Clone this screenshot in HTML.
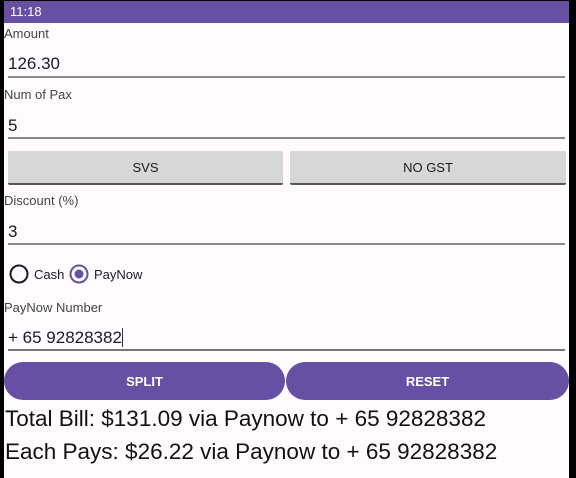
<!DOCTYPE html>
<html><head><style>
*{margin:0;padding:0;box-sizing:border-box}
body{width:576px;height:478px;background:#000;position:relative;overflow:hidden;font-family:"Liberation Sans",sans-serif;color:#1c1b1f}
#app{position:absolute;left:4px;top:1px;width:565px;height:477px;background:#fffbfe}
.sb{position:absolute;left:0;top:0;width:565px;height:22px;background:#6750a4;color:#fff;font-size:13px;line-height:22px;padding-left:6px}
.a{position:absolute}
.lbl{font-size:13px;color:#444}
.val{font-size:17px;color:#1c1b1f}
.line{position:absolute;height:2px;background:#8a8a8a;left:4px;width:557px}
.gb{position:absolute;top:150px;height:34px;background:#d6d7d7;border-bottom:2px solid #555;font-size:13px;display:flex;align-items:center;justify-content:center;border-radius:2px}
.pb{position:absolute;top:361px;height:38px;background:#6750a4;color:#fff;font-size:13px;font-weight:bold;border-radius:19px;display:flex;align-items:center;justify-content:center}
.big{font-size:22.5px;color:#111}
</style></head><body>
<div id="app">
<div class="sb">11:18</div>
<div class="a lbl" style="left:0;top:25px">Amount</div>
<div class="a val" style="left:4px;top:53px">126.30</div>
<div class="line" style="top:75px"></div>
<div class="a lbl" style="left:0;top:86px">Num of Pax</div>
<div class="a val" style="left:4px;top:115px">5</div>
<div class="line" style="top:136px"></div>
<div class="gb" style="left:4px;width:275px">SVS</div>
<div class="gb" style="left:286px;width:276px">NO GST</div>
<div class="a lbl" style="left:0;top:192px">Discount (%)</div>
<div class="a val" style="left:4px;top:221px">3</div>
<div class="line" style="top:242px"></div>
<svg class="a" style="left:5px;top:263px" width="120" height="22">
<circle cx="10" cy="10" r="8.5" fill="none" stroke="#1c1b1f" stroke-width="2"/>
<circle cx="70" cy="10" r="8.5" fill="none" stroke="#6750a4" stroke-width="2"/>
<circle cx="70" cy="10" r="4.5" fill="#6750a4"/>
</svg>
<div class="a" style="left:30px;top:266px;font-size:13px">Cash</div>
<div class="a" style="left:90px;top:266px;font-size:13px">PayNow</div>
<div class="a lbl" style="left:0;top:299px">PayNow Number</div>
<div class="a val" style="left:4px;top:327px">+ 65 92828382<span style="display:inline-block;width:1px;height:19px;background:#333;vertical-align:-4px"></span></div>
<div class="line" style="top:348px;background:#777"></div>
<div class="pb" style="left:0;width:281px">SPLIT</div>
<div class="pb" style="left:282px;width:283px">RESET</div>
<div class="a big" style="left:1px;top:405px">Total Bill: $131.09 via Paynow to + 65 92828382</div>
<div class="a big" style="left:1px;top:438px">Each Pays: $26.22 via Paynow to + 65 92828382</div>
</div>
</body></html>
